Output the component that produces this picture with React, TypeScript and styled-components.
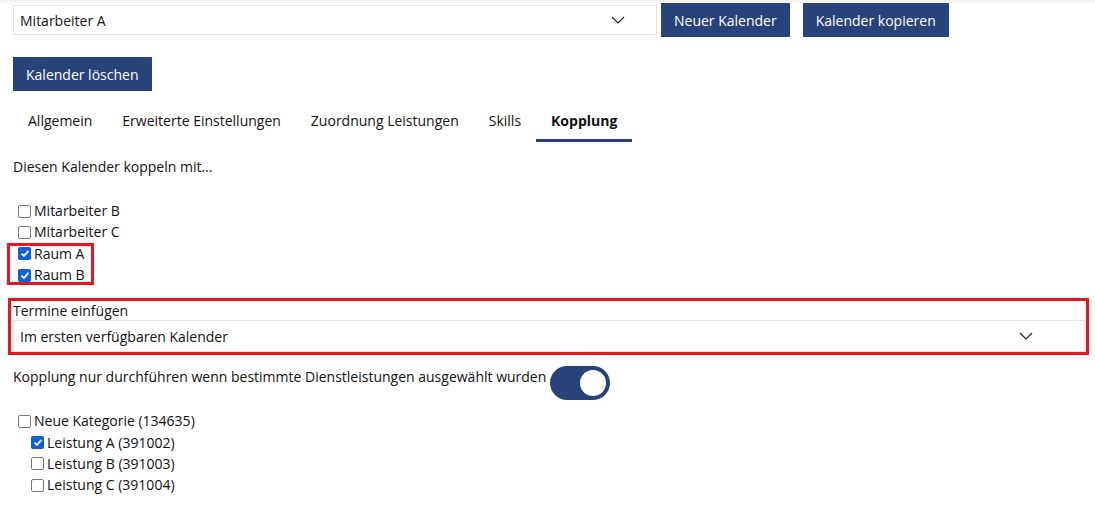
import React, { useState } from 'react';
import styled, { createGlobalStyle } from 'styled-components';

const GlobalStyle = createGlobalStyle`
  body {
    margin: 0;
    font-family: 'Open Sans', 'Noto Sans', sans-serif;
    font-size: 14px;
    color: #111;
    background: #fff;
  }
`;

const Page = styled.div`
  width: 1095px;
  min-height: 522px;
  padding: 3px 6px 0 13px;
  box-sizing: border-box;
  background: linear-gradient(#f0f0f0, #fff 5px);
`;

const TopRow = styled.div`
  display: flex;
  align-items: center;
  gap: 13px;
`;

const SelectBox = styled.div<{ $width?: string; $height?: number; $chevronGap?: number }>`
  display: flex;
  align-items: center;
  justify-content: space-between;
  width: ${(p) => p.$width || '100%'};
  height: ${(p) => p.$height || 30}px;
  box-sizing: border-box;
  border: 1px solid #e3e3e3;
  background: #fff;
  padding: 0 ${(p) => p.$chevronGap || 28}px 0 6px;
  flex-shrink: 0;
`;

const Chevron = () => (
  <svg width="14" height="8" viewBox="0 0 14 8">
    <path d="M1 1l6 6 6-6" fill="none" stroke="#222" strokeWidth="1.2" />
  </svg>
);

const Button = styled.button<{ $pullLeft?: boolean }>`
  height: 34px;
  padding: 0 13px;
  border: none;
  background: #28437a;
  color: #fff;
  font-family: inherit;
  font-size: 14px;
  cursor: pointer;
  margin-left: ${(p) => (p.$pullLeft ? '-9px' : '0')};
`;

const ButtonRow = styled.div`
  margin-top: 20px;
`;

const Tabs = styled.div`
  display: flex;
  margin-top: 10px;
  height: 41px;
`;

const Tab = styled.div<{ $active?: boolean }>`
  padding: 10px 15px 0;
  font-weight: ${(p) => (p.$active ? 700 : 400)};
  border-bottom: 3px solid ${(p) => (p.$active ? '#28437a' : 'transparent')};
`;

const Intro = styled.div`
  margin-top: 15px;
  margin-bottom: 24px;
`;

const CheckList = styled.div`
  display: flex;
  flex-direction: column;
`;

const Marked = styled.div`
  outline: 3px solid #e8141f;
  outline-offset: -3px;
  margin-left: -6px;
  padding-left: 6px;
  width: 81px;
`;

const MarkedField = styled.div`
  border: 3px solid #e8141f;
  margin-top: 13px;
  margin-left: -5px;
  padding: 0 1px 0 2px;
  width: 1081px;
  box-sizing: border-box;
`;

const Row = styled.label<{ $indent?: number }>`
  display: flex;
  align-items: center;
  height: 21.3px;
  padding-left: ${(p) => 5 + (p.$indent || 0)}px;
  gap: 3px;
`;

const Box = styled.span<{ $checked?: boolean }>`
  width: 13px;
  height: 13px;
  box-sizing: border-box;
  border-radius: 2px;
  border: ${(p) => (p.$checked ? 'none' : '1.5px solid #767676')};
  background: ${(p) => (p.$checked ? '#0b62d8' : '#fff')};
  display: flex;
  align-items: center;
  justify-content: center;
  margin-top: 1px;
`;

const Check = ({ checked, label, indent }: { checked?: boolean; label: string; indent?: number }) => (
  <Row $indent={indent}>
    <Box $checked={checked}>
      {checked && (
        <svg width="10" height="9" viewBox="0 0 10 9">
          <path d="M1.5 4.6l2.4 2.4 4.6-5.2" fill="none" stroke="#fff" strokeWidth="1.8" />
        </svg>
      )}
    </Box>
    {label}
  </Row>
);

const FieldLabel = styled.div`
  height: 19px;
  line-height: 19px;
`;

const ToggleRow = styled.div`
  display: flex;
  align-items: flex-start;
  margin-top: 12px;
  line-height: 20px;
`;

const Toggle = styled.div<{ $on: boolean }>`
  width: 60px;
  height: 34px;
  border-radius: 17px;
  background: ${(p) => (p.$on ? '#28437a' : '#ccc')};
  position: relative;
  margin-left: 4px;
  margin-top: -1px;
  cursor: pointer;
  &::after {
    content: '';
    position: absolute;
    top: 4px;
    left: ${(p) => (p.$on ? '30px' : '4px')};
    width: 26px;
    height: 26px;
    border-radius: 50%;
    background: #fff;
  }
`;

const Tree = styled.div`
  margin-top: 10px;
`;

export default function App() {
  const [on, setOn] = useState(true);
  return (
    <Page>
      <GlobalStyle />
      <TopRow>
        <SelectBox $width="644px" $chevronGap={31}>
          Mitarbeiter A
          <Chevron />
        </SelectBox>
        <Button $pullLeft>Neuer Kalender</Button>
        <Button>Kalender kopieren</Button>
      </TopRow>
      <ButtonRow>
        <Button>Kalender löschen</Button>
      </ButtonRow>
      <Tabs>
        <Tab>Allgemein</Tab>
        <Tab>Erweiterte Einstellungen</Tab>
        <Tab>Zuordnung Leistungen</Tab>
        <Tab>Skills</Tab>
        <Tab $active>Kopplung</Tab>
      </Tabs>
      <Intro>Diesen Kalender koppeln mit...</Intro>
      <CheckList>
        <Check label="Mitarbeiter B" />
        <Check label="Mitarbeiter C" />
        <Marked>
          <Check label="Raum A" checked />
          <Check label="Raum B" checked />
        </Marked>
      </CheckList>
      <MarkedField>
        <FieldLabel>Termine einfügen</FieldLabel>
        <SelectBox $height={32} $chevronGap={51}>
          Im ersten verfügbaren Kalender
          <Chevron />
        </SelectBox>
      </MarkedField>
      <ToggleRow>
        Kopplung nur durchführen wenn bestimmte Dienstleistungen ausgewählt wurden
        <Toggle $on={on} onClick={() => setOn(!on)} />
      </ToggleRow>
      <Tree>
        <Check label="Neue Kategorie (134635)" />
        <Check label="Leistung A (391002)" checked indent={13} />
        <Check label="Leistung B (391003)" indent={13} />
        <Check label="Leistung C (391004)" indent={13} />
      </Tree>
    </Page>
  );
}
